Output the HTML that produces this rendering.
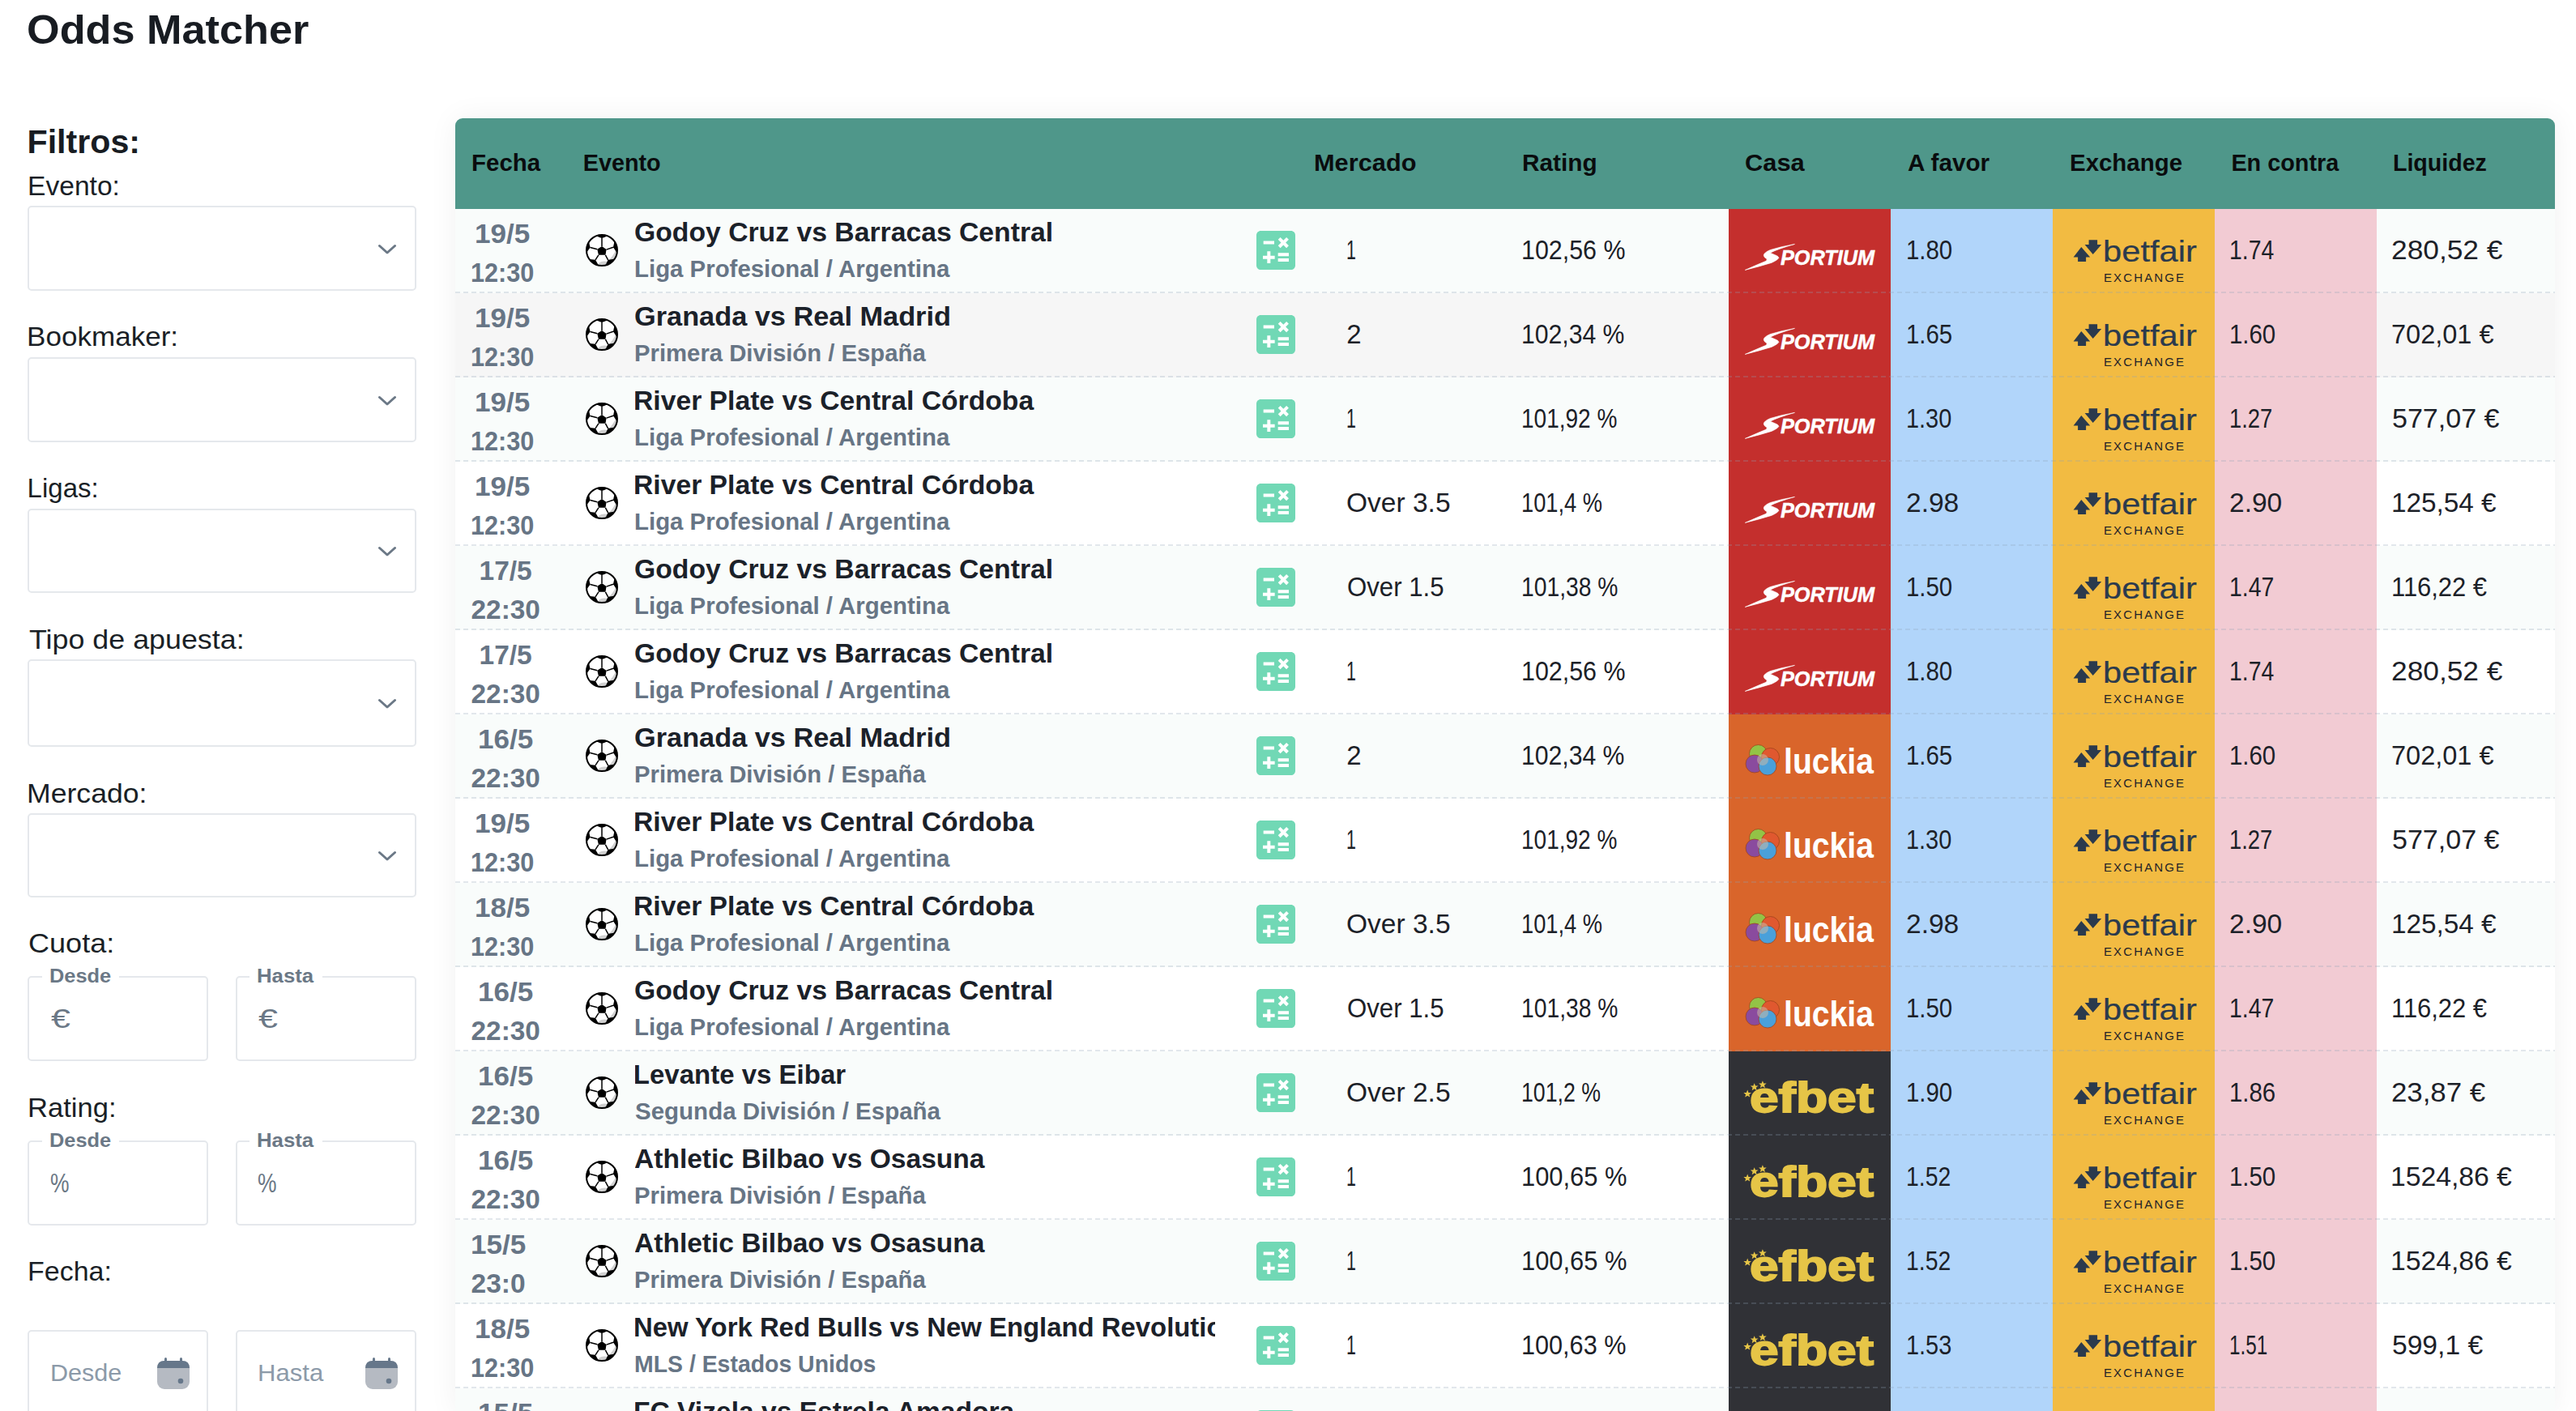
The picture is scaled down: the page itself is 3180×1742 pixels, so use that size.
<!DOCTYPE html><html><head><meta charset="utf-8"><style>
html,body{margin:0;padding:0}
body{width:3180px;height:1742px;overflow:hidden;background:#fff;position:relative;font-family:"Liberation Sans",sans-serif}
.t{position:absolute;white-space:nowrap;line-height:1}
.box{position:absolute;box-sizing:border-box;border:2px solid #e5e8ec;border-radius:5px;background:#fff}
.chev{position:absolute;width:24px;height:14px}
.card{position:absolute;left:562px;top:146px;width:2592px;height:1600px;border-radius:9px 9px 0 0;box-shadow:0 0 36px rgba(20,30,40,0.06);overflow:hidden;background:#fff}
.hdr{position:absolute;left:0;top:0;width:2592px;height:112px;background:#4f978a}
.row{position:absolute;left:0;width:2592px;height:104px}
.cell{position:absolute;top:0;height:104px}
.dash{position:absolute;left:0;bottom:0;height:2px;width:100%;background:repeating-linear-gradient(90deg,rgba(140,160,180,0.25) 0 6px,transparent 6px 10px)}
</style></head><body>
<div class="t" style="left:32.9px;top:12.2px;font-size:49.4px;font-weight:bold;color:#181c22;transform:scaleX(1.0578);transform-origin:0 0;">Odds Matcher</div>
<div class="t" style="left:33.5px;top:155.3px;font-size:41.2px;font-weight:bold;color:#181c22;transform-origin:0 0;">Filtros:</div>
<div class="t" style="left:33.5px;top:213.1px;font-size:33.0px;font-weight:normal;color:#1a1f26;transform:scaleX(1.0179);transform-origin:0 0;">Evento:</div>
<div class="t" style="left:33.4px;top:399.1px;font-size:33.0px;font-weight:normal;color:#1a1f26;transform:scaleX(1.0625);transform-origin:0 0;">Bookmaker:</div>
<div class="t" style="left:33.6px;top:586.1px;font-size:33.0px;font-weight:normal;color:#1a1f26;transform-origin:0 0;">Ligas:</div>
<div class="t" style="left:35.5px;top:772.7px;font-size:33.0px;font-weight:normal;color:#1a1f26;transform:scaleX(1.0857);transform-origin:0 0;">Tipo de apuesta:</div>
<div class="t" style="left:33.4px;top:962.8px;font-size:33.0px;font-weight:normal;color:#1a1f26;transform:scaleX(1.0797);transform-origin:0 0;">Mercado:</div>
<div class="t" style="left:34.5px;top:1148.3px;font-size:33.0px;font-weight:normal;color:#1a1f26;transform:scaleX(1.0928);transform-origin:0 0;">Cuota:</div>
<div class="t" style="left:33.5px;top:1351.1px;font-size:33.0px;font-weight:normal;color:#1a1f26;transform:scaleX(1.0476);transform-origin:0 0;">Rating:</div>
<div class="t" style="left:33.5px;top:1553.1px;font-size:33.0px;font-weight:normal;color:#1a1f26;transform:scaleX(1.0297);transform-origin:0 0;">Fecha:</div>
<div class="box" style="left:34px;top:254px;width:480px;height:105px"></div>
<svg class="chev" style="left:466px;top:299.5px" viewBox="0 0 24 14"><path d="M2.5 3.5 L12 12 L21.5 3.5" fill="none" stroke="#6b7886" stroke-width="3" stroke-linecap="round" stroke-linejoin="round"/></svg>
<div class="box" style="left:34px;top:441px;width:480px;height:105px"></div>
<svg class="chev" style="left:466px;top:486.5px" viewBox="0 0 24 14"><path d="M2.5 3.5 L12 12 L21.5 3.5" fill="none" stroke="#6b7886" stroke-width="3" stroke-linecap="round" stroke-linejoin="round"/></svg>
<div class="box" style="left:34px;top:628px;width:480px;height:104px"></div>
<svg class="chev" style="left:466px;top:673.0px" viewBox="0 0 24 14"><path d="M2.5 3.5 L12 12 L21.5 3.5" fill="none" stroke="#6b7886" stroke-width="3" stroke-linecap="round" stroke-linejoin="round"/></svg>
<div class="box" style="left:34px;top:814px;width:480px;height:107.5px"></div>
<svg class="chev" style="left:466px;top:860.75px" viewBox="0 0 24 14"><path d="M2.5 3.5 L12 12 L21.5 3.5" fill="none" stroke="#6b7886" stroke-width="3" stroke-linecap="round" stroke-linejoin="round"/></svg>
<div class="box" style="left:34px;top:1004px;width:480px;height:103.5px"></div>
<svg class="chev" style="left:466px;top:1048.75px" viewBox="0 0 24 14"><path d="M2.5 3.5 L12 12 L21.5 3.5" fill="none" stroke="#6b7886" stroke-width="3" stroke-linecap="round" stroke-linejoin="round"/></svg>
<div class="box" style="left:34px;top:1205px;width:223px;height:105px"></div>
<div style="position:absolute;left:52px;top:1203px;width:95px;height:6px;background:#fff"></div>
<div class="t" style="left:61.3px;top:1193.1px;font-size:24.7px;font-weight:bold;color:#6b7886;transform:scaleX(1.0270);transform-origin:0 0;">Desde</div>
<div class="t" style="left:62.7px;top:1241.1px;font-size:33.0px;font-weight:normal;color:#6b7886;transform:scaleX(1.3000);transform-origin:0 0;">€</div>
<div class="box" style="left:291px;top:1205px;width:223px;height:105px"></div>
<div style="position:absolute;left:308px;top:1203px;width:90px;height:6px;background:#fff"></div>
<div class="t" style="left:317.3px;top:1193.1px;font-size:24.7px;font-weight:bold;color:#6b7886;transform:scaleX(1.0435);transform-origin:0 0;">Hasta</div>
<div class="t" style="left:318.7px;top:1241.1px;font-size:33.0px;font-weight:normal;color:#6b7886;transform:scaleX(1.3000);transform-origin:0 0;">€</div>
<div class="box" style="left:34px;top:1408px;width:223px;height:105px"></div>
<div style="position:absolute;left:52px;top:1406px;width:95px;height:6px;background:#fff"></div>
<div class="t" style="left:61.3px;top:1396.1px;font-size:24.7px;font-weight:bold;color:#6b7886;transform:scaleX(1.0270);transform-origin:0 0;">Desde</div>
<div class="t" style="left:62.1px;top:1444.1px;font-size:33.0px;font-weight:normal;color:#6b7886;transform:scaleX(0.8000);transform-origin:0 0;">%</div>
<div class="box" style="left:291px;top:1408px;width:223px;height:105px"></div>
<div style="position:absolute;left:308px;top:1406px;width:90px;height:6px;background:#fff"></div>
<div class="t" style="left:317.3px;top:1396.1px;font-size:24.7px;font-weight:bold;color:#6b7886;transform:scaleX(1.0435);transform-origin:0 0;">Hasta</div>
<div class="t" style="left:318.1px;top:1444.1px;font-size:33.0px;font-weight:normal;color:#6b7886;transform:scaleX(0.8000);transform-origin:0 0;">%</div>
<div class="box" style="left:34px;top:1642px;width:223px;height:140px"></div>
<div class="t" style="left:61.5px;top:1680.6px;font-size:28.8px;font-weight:normal;color:#8c9aa9;transform:scaleX(1.0602);transform-origin:0 0;">Desde</div>
<svg style="position:absolute;left:194px;top:1675px;width:42px;height:42px" viewBox="0 0 42 42"><rect x="0" y="5" width="40" height="35" rx="9" fill="#b5bac2"/><path d="M0 14 V14 Q0 5 9 5 H31 Q40 5 40 14 V14 Z" fill="#66778a"/><rect x="9" y="1" width="3" height="7" rx="1.5" fill="#66778a"/><rect x="28" y="1" width="3" height="7" rx="1.5" fill="#66778a"/><circle cx="29" cy="30" r="3.3" fill="#66778a"/></svg>
<div class="box" style="left:291px;top:1642px;width:223px;height:140px"></div>
<div class="t" style="left:318.0px;top:1680.6px;font-size:28.8px;font-weight:normal;color:#8c9aa9;transform:scaleX(1.0789);transform-origin:0 0;">Hasta</div>
<svg style="position:absolute;left:451px;top:1675px;width:42px;height:42px" viewBox="0 0 42 42"><rect x="0" y="5" width="40" height="35" rx="9" fill="#b5bac2"/><path d="M0 14 V14 Q0 5 9 5 H31 Q40 5 40 14 V14 Z" fill="#66778a"/><rect x="9" y="1" width="3" height="7" rx="1.5" fill="#66778a"/><rect x="28" y="1" width="3" height="7" rx="1.5" fill="#66778a"/><circle cx="29" cy="30" r="3.3" fill="#66778a"/></svg>
<div class="card">
<div class="hdr"></div>
<div class="t" style="left:20.3px;top:41.1px;font-size:28.8px;font-weight:bold;color:#0a0c0e;transform:scaleX(1.0238);transform-origin:0 0;">Fecha</div>
<div class="t" style="left:157.7px;top:41.1px;font-size:28.8px;font-weight:bold;color:#0a0c0e;transform-origin:0 0;">Evento</div>
<div class="t" style="left:1060.1px;top:41.1px;font-size:28.8px;font-weight:bold;color:#0a0c0e;transform:scaleX(1.0678);transform-origin:0 0;">Mercado</div>
<div class="t" style="left:1317.2px;top:41.1px;font-size:28.8px;font-weight:bold;color:#0a0c0e;transform:scaleX(1.0333);transform-origin:0 0;">Rating</div>
<div class="t" style="left:1592.2px;top:41.1px;font-size:28.8px;font-weight:bold;color:#0a0c0e;transform:scaleX(1.0714);transform-origin:0 0;">Casa</div>
<div class="t" style="left:1792.8px;top:41.1px;font-size:28.8px;font-weight:bold;color:#0a0c0e;transform:scaleX(1.0306);transform-origin:0 0;">A favor</div>
<div class="t" style="left:1992.9px;top:41.1px;font-size:28.8px;font-weight:bold;color:#0a0c0e;transform:scaleX(1.0221);transform-origin:0 0;">Exchange</div>
<div class="t" style="left:2192.4px;top:41.1px;font-size:28.8px;font-weight:bold;color:#0a0c0e;transform-origin:0 0;">En contra</div>
<div class="t" style="left:2392.1px;top:41.1px;font-size:28.8px;font-weight:bold;color:#0a0c0e;transform:scaleX(0.9915);transform-origin:0 0;">Liquidez</div>
<svg width="0" height="0" style="position:absolute"><defs>
<clipPath id="bc"><circle cx="20" cy="20" r="19"/></clipPath>
<symbol id="ball" viewBox="0 0 40 40">
<circle cx="20" cy="20" r="19" fill="#fff"/>
<g clip-path="url(#bc)">
<path d="M38.5 20 L37.5 30.5 L29.5 31.6 Q33.5 27 37.5 20Z M16 35.8 Q21 32.2 27 34 L25 39 L16 39Z" fill="#d0d0d0"/>
<g fill="#000">
<path d="M10 -2 L13.8 2.6 Q17 4.6 20 4.9 Q23 4.6 26.2 2.6 L30 -2Z"/>
<path d="M3.9 9.2 L5.6 16.6 L1.2 22.8 L-3 22.8 L-3 9.2Z"/>
<path d="M35.4 9.6 L34 16.3 L38.6 23.3 L43 23.3 L43 9.6Z"/>
<path d="M4.9 31.1 L12 31.85 L15.9 38.6 L14 43 L0 35Z"/>
<path d="M27.6 31.85 L36.8 30.4 L40 35 L26 43 L24.4 38.6Z"/>
<polygon points="20,15 25.65,19.1 24.4,25.8 15.9,25.8 14.3,18.7"/>
</g>
<path d="M20 15 V4.5 M25.65 19.1 L34 16.3 M24.4 25.8 L27.6 31.85 M15.9 25.8 L12 31.85 M14.3 18.7 L5.6 16.6" stroke="#000" stroke-width="1.5" fill="none"/>
</g>
<circle cx="20" cy="20" r="19" fill="none" stroke="#000" stroke-width="2"/>
</symbol>
<symbol id="calc" viewBox="3 3 18 18"><path fill="#71d8b5" d="M19 3H5c-1.1 0-2 .9-2 2v14c0 1.1.9 2 2 2h14c1.1 0 2-.9 2-2V5c0-1.1-.9-2-2-2z"/><path fill="#fff" d="M13.03 7.06L14.09 6l1.41 1.41L16.91 6l1.06 1.06-1.41 1.41 1.41 1.41-1.06 1.06-1.41-1.4-1.41 1.41-1.06-1.06 1.41-1.41-1.41-1.42zm-6.78.66h5v1.5h-5v-1.5zM11.5 16h-2v2H8v-2H6v-1.5h2v-2h1.5v2h2V16zm6.5 1.25h-5v-1.5h5v1.5zm0-2.5h-5v-1.5h5v1.5z"/></symbol>
<symbol id="sportium" viewBox="0 0 200 104">
<path d="M81.5 43.4 Q66 46 51.4 50.5 Q44 53.5 43.2 57 Q43.5 60 47.2 61.8 L46.6 64.1 Q38 67.5 20.3 75.4 Q38 71 52.9 66.4 Q60.5 63 61.9 60.4 Q61.5 58.5 59 57.5 L51.4 54.2 Q60 49.5 81.5 43.4 Z" fill="#fff" stroke="#fff" stroke-width="0.6" stroke-linejoin="round"/>
<text x="64" y="69" font-family="Liberation Sans" font-weight="bold" font-style="italic" font-size="25" fill="#fff" textLength="116" lengthAdjust="spacingAndGlyphs" stroke="#fff" stroke-width="0.5">PORTIUM</text>
</symbol>
<symbol id="luckia" viewBox="0 0 200 104">
<g transform="translate(42 57)" stroke="#a0441c" stroke-width="0.8"><circle cx="-5.5" cy="-8.5" r="11" fill="#93c346"/><circle cx="9.5" cy="-4.5" r="11" fill="#e0582f"/><circle cx="-10" cy="4" r="11" fill="#8a4b9e"/><circle cx="6" cy="7" r="11" fill="#4aa0da"/><circle cx="0" cy="-1" r="7" fill="#c8b9a8" opacity="0.55" stroke="none"/></g>
<text x="68" y="72.5" font-family="Liberation Sans" font-weight="bold" font-size="45" fill="#fff" textLength="111" lengthAdjust="spacingAndGlyphs">luckia</text>
</symbol>
<symbol id="efbet" viewBox="0 0 200 104">
<text x="26" y="75" font-family="Liberation Sans" font-weight="bold" font-size="51" fill="#e6c547" stroke="#e6c547" stroke-width="1.8" textLength="153" lengthAdjust="spacingAndGlyphs">efbet</text>
<g fill="#e6c547"><polygon points="23.2,47.6 24.5,50.9 28,51 25.3,53.2 26.2,56.6 23.2,54.7 20.2,56.6 21.1,53.2 18.4,51 21.9,50.9"/><polygon points="31.7,39.2 33,42.5 36.5,42.6 33.8,44.8 34.7,48.2 31.7,46.3 28.7,48.2 29.6,44.8 26.9,42.6 30.4,42.5"/><polygon points="41.9,36.2 43.2,39.5 46.7,39.6 44,41.8 44.9,45.2 41.9,43.3 38.9,45.2 39.8,41.8 37.1,39.6 40.6,39.5"/></g>
</symbol>
<symbol id="betfair" viewBox="0 0 200 104">
<g fill="#2b3a4d"><polygon points="25.6,59.5 35.3,47.1 46.2,59.5 41.1,59.5 41.1,64.9 31.1,64.9 31.1,59.5"/><polygon points="44.6,38.2 55.1,38.2 55.1,44 60.2,44 49.7,56 39.6,44 44.6,44"/></g>
<text x="62" y="64.6" font-family="Liberation Sans" font-size="36" fill="#2b3a4d" stroke="#2b3a4d" stroke-width="0.2" textLength="116" lengthAdjust="spacingAndGlyphs">betfair</text>
<text x="63" y="89.8" font-family="Liberation Sans" font-size="15" fill="#1f2328" textLength="99" lengthAdjust="spacing">EXCHANGE</text>
</symbol>
</defs></svg>
<div class="row" style="top:112px;background:#f9fcfb">
<div class="cell" style="left:1572px;width:200px;background:#c42f2d"></div>
<div class="cell" style="left:1772px;width:200px;background:#b1d5fa"></div>
<div class="cell" style="left:1972px;width:200px;background:#f2bb42"></div>
<div class="cell" style="left:2172px;width:200px;background:#f2cbd3"></div>
<svg style="position:absolute;left:1572px;top:0px;width:200px;height:104px"><use href="#sportium"/></svg>
<svg style="position:absolute;left:1972px;top:0px;width:200px;height:104px"><use href="#betfair"/></svg>
<div class="dash"></div>
<div class="t" style="left:-341.5px;width:800px;text-align:center;top:14.1px;font-size:33.0px;font-weight:bold;color:#677585;"><span style="display:inline-block;transform:scaleX(1.0625);transform-origin:50% 0">19/5</span></div>
<div class="t" style="left:-341.5px;width:800px;text-align:center;top:62.1px;font-size:33.0px;font-weight:bold;color:#677585;"><span style="display:inline-block;transform:scaleX(0.9286);transform-origin:50% 0">12:30</span></div>
<svg style="position:absolute;left:161px;top:31px;width:40px;height:40px"><use href="#ball"/></svg>
<div style="position:absolute;left:222px;top:0;width:716px;height:104px;overflow:hidden">
<div class="t" style="left:-1.4px;top:12.1px;font-size:33.0px;font-weight:bold;color:#1b2129;transform:scaleX(1.0217);transform-origin:0 0;">Godoy Cruz vs Barracas Central</div>
<div class="t" style="left:-1.2px;top:59.6px;font-size:28.8px;font-weight:bold;color:#677585;transform:scaleX(1.0209);transform-origin:0 0;">Liga Profesional / Argentina</div>
</div>
<svg style="position:absolute;left:989px;top:27px;width:48px;height:48px"><use href="#calc"/></svg>
<div class="t" style="left:1100.4px;top:33.9px;font-size:33.0px;font-weight:normal;color:#1c2128;transform:scaleX(0.6500);transform-origin:0 0;">1</div>
<div class="t" style="left:1315.7px;top:33.9px;font-size:33.0px;font-weight:normal;color:#1c2128;transform:scaleX(0.9209);transform-origin:0 0;">102,56 %</div>
<div class="t" style="left:1790.8px;top:33.9px;font-size:33.0px;font-weight:normal;color:#1c2128;transform:scaleX(0.8906);transform-origin:0 0;">1.80</div>
<div class="t" style="left:2189.8px;top:33.9px;font-size:33.0px;font-weight:normal;color:#1c2128;transform:scaleX(0.8594);transform-origin:0 0;">1.74</div>
<div class="t" style="left:2390.2px;top:33.9px;font-size:33.0px;font-weight:normal;color:#1c2128;transform:scaleX(1.0698);transform-origin:0 0;">280,52 €</div>
</div>
<div class="row" style="top:216px;background:#f6f6f6">
<div class="cell" style="left:1572px;width:200px;background:#c42f2d"></div>
<div class="cell" style="left:1772px;width:200px;background:#b1d5fa"></div>
<div class="cell" style="left:1972px;width:200px;background:#f2bb42"></div>
<div class="cell" style="left:2172px;width:200px;background:#f2cbd3"></div>
<svg style="position:absolute;left:1572px;top:0px;width:200px;height:104px"><use href="#sportium"/></svg>
<svg style="position:absolute;left:1972px;top:0px;width:200px;height:104px"><use href="#betfair"/></svg>
<div class="dash"></div>
<div class="t" style="left:-341.5px;width:800px;text-align:center;top:14.1px;font-size:33.0px;font-weight:bold;color:#677585;"><span style="display:inline-block;transform:scaleX(1.0625);transform-origin:50% 0">19/5</span></div>
<div class="t" style="left:-341.5px;width:800px;text-align:center;top:62.1px;font-size:33.0px;font-weight:bold;color:#677585;"><span style="display:inline-block;transform:scaleX(0.9286);transform-origin:50% 0">12:30</span></div>
<svg style="position:absolute;left:161px;top:31px;width:40px;height:40px"><use href="#ball"/></svg>
<div style="position:absolute;left:222px;top:0;width:716px;height:104px;overflow:hidden">
<div class="t" style="left:-1.4px;top:12.1px;font-size:33.0px;font-weight:bold;color:#1b2129;transform:scaleX(1.0399);transform-origin:0 0;">Granada vs Real Madrid</div>
<div class="t" style="left:-1.2px;top:59.6px;font-size:28.8px;font-weight:bold;color:#677585;transform:scaleX(1.0169);transform-origin:0 0;">Primera División / España</div>
</div>
<svg style="position:absolute;left:989px;top:27px;width:48px;height:48px"><use href="#calc"/></svg>
<div class="t" style="left:1100.3px;top:33.9px;font-size:33.0px;font-weight:normal;color:#1c2128;transform-origin:0 0;">2</div>
<div class="t" style="left:1315.7px;top:33.9px;font-size:33.0px;font-weight:normal;color:#1c2128;transform:scaleX(0.9137);transform-origin:0 0;">102,34 %</div>
<div class="t" style="left:1790.8px;top:33.9px;font-size:33.0px;font-weight:normal;color:#1c2128;transform:scaleX(0.8906);transform-origin:0 0;">1.65</div>
<div class="t" style="left:2189.8px;top:33.9px;font-size:33.0px;font-weight:normal;color:#1c2128;transform:scaleX(0.8906);transform-origin:0 0;">1.60</div>
<div class="t" style="left:2390.3px;top:33.9px;font-size:33.0px;font-weight:normal;color:#1c2128;transform:scaleX(0.9845);transform-origin:0 0;">702,01 €</div>
</div>
<div class="row" style="top:320px;background:#f9fcfb">
<div class="cell" style="left:1572px;width:200px;background:#c42f2d"></div>
<div class="cell" style="left:1772px;width:200px;background:#b1d5fa"></div>
<div class="cell" style="left:1972px;width:200px;background:#f2bb42"></div>
<div class="cell" style="left:2172px;width:200px;background:#f2cbd3"></div>
<svg style="position:absolute;left:1572px;top:0px;width:200px;height:104px"><use href="#sportium"/></svg>
<svg style="position:absolute;left:1972px;top:0px;width:200px;height:104px"><use href="#betfair"/></svg>
<div class="dash"></div>
<div class="t" style="left:-341.5px;width:800px;text-align:center;top:14.1px;font-size:33.0px;font-weight:bold;color:#677585;"><span style="display:inline-block;transform:scaleX(1.0625);transform-origin:50% 0">19/5</span></div>
<div class="t" style="left:-341.5px;width:800px;text-align:center;top:62.1px;font-size:33.0px;font-weight:bold;color:#677585;"><span style="display:inline-block;transform:scaleX(0.9286);transform-origin:50% 0">12:30</span></div>
<svg style="position:absolute;left:161px;top:31px;width:40px;height:40px"><use href="#ball"/></svg>
<div style="position:absolute;left:222px;top:0;width:716px;height:104px;overflow:hidden">
<div class="t" style="left:-2.3px;top:12.1px;font-size:33.0px;font-weight:bold;color:#1b2129;transform:scaleX(1.0206);transform-origin:0 0;">River Plate vs Central Córdoba</div>
<div class="t" style="left:-1.2px;top:59.6px;font-size:28.8px;font-weight:bold;color:#677585;transform:scaleX(1.0209);transform-origin:0 0;">Liga Profesional / Argentina</div>
</div>
<svg style="position:absolute;left:989px;top:27px;width:48px;height:48px"><use href="#calc"/></svg>
<div class="t" style="left:1100.4px;top:33.9px;font-size:33.0px;font-weight:normal;color:#1c2128;transform:scaleX(0.6500);transform-origin:0 0;">1</div>
<div class="t" style="left:1315.9px;top:33.9px;font-size:33.0px;font-weight:normal;color:#1c2128;transform:scaleX(0.8489);transform-origin:0 0;">101,92 %</div>
<div class="t" style="left:1790.8px;top:33.9px;font-size:33.0px;font-weight:normal;color:#1c2128;transform:scaleX(0.8750);transform-origin:0 0;">1.30</div>
<div class="t" style="left:2189.9px;top:33.9px;font-size:33.0px;font-weight:normal;color:#1c2128;transform:scaleX(0.8281);transform-origin:0 0;">1.27</div>
<div class="t" style="left:2390.6px;top:33.9px;font-size:33.0px;font-weight:normal;color:#1c2128;transform:scaleX(1.0310);transform-origin:0 0;">577,07 €</div>
</div>
<div class="row" style="top:424px;background:#ffffff">
<div class="cell" style="left:1572px;width:200px;background:#c42f2d"></div>
<div class="cell" style="left:1772px;width:200px;background:#b1d5fa"></div>
<div class="cell" style="left:1972px;width:200px;background:#f2bb42"></div>
<div class="cell" style="left:2172px;width:200px;background:#f2cbd3"></div>
<svg style="position:absolute;left:1572px;top:0px;width:200px;height:104px"><use href="#sportium"/></svg>
<svg style="position:absolute;left:1972px;top:0px;width:200px;height:104px"><use href="#betfair"/></svg>
<div class="dash"></div>
<div class="t" style="left:-341.5px;width:800px;text-align:center;top:14.1px;font-size:33.0px;font-weight:bold;color:#677585;"><span style="display:inline-block;transform:scaleX(1.0625);transform-origin:50% 0">19/5</span></div>
<div class="t" style="left:-341.5px;width:800px;text-align:center;top:62.1px;font-size:33.0px;font-weight:bold;color:#677585;"><span style="display:inline-block;transform:scaleX(0.9286);transform-origin:50% 0">12:30</span></div>
<svg style="position:absolute;left:161px;top:31px;width:40px;height:40px"><use href="#ball"/></svg>
<div style="position:absolute;left:222px;top:0;width:716px;height:104px;overflow:hidden">
<div class="t" style="left:-2.3px;top:12.1px;font-size:33.0px;font-weight:bold;color:#1b2129;transform:scaleX(1.0206);transform-origin:0 0;">River Plate vs Central Córdoba</div>
<div class="t" style="left:-1.2px;top:59.6px;font-size:28.8px;font-weight:bold;color:#677585;transform:scaleX(1.0209);transform-origin:0 0;">Liga Profesional / Argentina</div>
</div>
<svg style="position:absolute;left:989px;top:27px;width:48px;height:48px"><use href="#calc"/></svg>
<div class="t" style="left:1100.4px;top:33.9px;font-size:33.0px;font-weight:normal;color:#1c2128;transform:scaleX(1.0157);transform-origin:0 0;">Over 3.5</div>
<div class="t" style="left:1315.9px;top:33.9px;font-size:33.0px;font-weight:normal;color:#1c2128;transform:scaleX(0.8264);transform-origin:0 0;">101,4 %</div>
<div class="t" style="left:1791.3px;top:33.9px;font-size:33.0px;font-weight:normal;color:#1c2128;transform:scaleX(1.0156);transform-origin:0 0;">2.98</div>
<div class="t" style="left:2190.3px;top:33.9px;font-size:33.0px;font-weight:normal;color:#1c2128;transform:scaleX(1.0156);transform-origin:0 0;">2.90</div>
<div class="t" style="left:2389.5px;top:33.9px;font-size:33.0px;font-weight:normal;color:#1c2128;transform:scaleX(1.0078);transform-origin:0 0;">125,54 €</div>
</div>
<div class="row" style="top:528px;background:#f9fcfb">
<div class="cell" style="left:1572px;width:200px;background:#c42f2d"></div>
<div class="cell" style="left:1772px;width:200px;background:#b1d5fa"></div>
<div class="cell" style="left:1972px;width:200px;background:#f2bb42"></div>
<div class="cell" style="left:2172px;width:200px;background:#f2cbd3"></div>
<svg style="position:absolute;left:1572px;top:0px;width:200px;height:104px"><use href="#sportium"/></svg>
<svg style="position:absolute;left:1972px;top:0px;width:200px;height:104px"><use href="#betfair"/></svg>
<div class="dash"></div>
<div class="t" style="left:-338.0px;width:800px;text-align:center;top:14.1px;font-size:33.0px;font-weight:bold;color:#677585;"><span style="display:inline-block;transform:scaleX(1.0156);transform-origin:50% 0">17/5</span></div>
<div class="t" style="left:-338.0px;width:800px;text-align:center;top:62.1px;font-size:33.0px;font-weight:bold;color:#677585;"><span style="display:inline-block;transform:scaleX(1.0119);transform-origin:50% 0">22:30</span></div>
<svg style="position:absolute;left:161px;top:31px;width:40px;height:40px"><use href="#ball"/></svg>
<div style="position:absolute;left:222px;top:0;width:716px;height:104px;overflow:hidden">
<div class="t" style="left:-1.4px;top:12.1px;font-size:33.0px;font-weight:bold;color:#1b2129;transform:scaleX(1.0217);transform-origin:0 0;">Godoy Cruz vs Barracas Central</div>
<div class="t" style="left:-1.2px;top:59.6px;font-size:28.8px;font-weight:bold;color:#677585;transform:scaleX(1.0209);transform-origin:0 0;">Liga Profesional / Argentina</div>
</div>
<svg style="position:absolute;left:989px;top:27px;width:48px;height:48px"><use href="#calc"/></svg>
<div class="t" style="left:1100.5px;top:33.9px;font-size:33.0px;font-weight:normal;color:#1c2128;transform:scaleX(0.9449);transform-origin:0 0;">Over 1.5</div>
<div class="t" style="left:1315.8px;top:33.9px;font-size:33.0px;font-weight:normal;color:#1c2128;transform:scaleX(0.8561);transform-origin:0 0;">101,38 %</div>
<div class="t" style="left:1790.8px;top:33.9px;font-size:33.0px;font-weight:normal;color:#1c2128;transform:scaleX(0.8906);transform-origin:0 0;">1.50</div>
<div class="t" style="left:2189.8px;top:33.9px;font-size:33.0px;font-weight:normal;color:#1c2128;transform:scaleX(0.8594);transform-origin:0 0;">1.47</div>
<div class="t" style="left:2389.6px;top:33.9px;font-size:33.0px;font-weight:normal;color:#1c2128;transform:scaleX(0.9365);transform-origin:0 0;">116,22 €</div>
</div>
<div class="row" style="top:632px;background:#ffffff">
<div class="cell" style="left:1572px;width:200px;background:#c42f2d"></div>
<div class="cell" style="left:1772px;width:200px;background:#b1d5fa"></div>
<div class="cell" style="left:1972px;width:200px;background:#f2bb42"></div>
<div class="cell" style="left:2172px;width:200px;background:#f2cbd3"></div>
<svg style="position:absolute;left:1572px;top:0px;width:200px;height:104px"><use href="#sportium"/></svg>
<svg style="position:absolute;left:1972px;top:0px;width:200px;height:104px"><use href="#betfair"/></svg>
<div class="dash"></div>
<div class="t" style="left:-338.0px;width:800px;text-align:center;top:14.1px;font-size:33.0px;font-weight:bold;color:#677585;"><span style="display:inline-block;transform:scaleX(1.0156);transform-origin:50% 0">17/5</span></div>
<div class="t" style="left:-338.0px;width:800px;text-align:center;top:62.1px;font-size:33.0px;font-weight:bold;color:#677585;"><span style="display:inline-block;transform:scaleX(1.0119);transform-origin:50% 0">22:30</span></div>
<svg style="position:absolute;left:161px;top:31px;width:40px;height:40px"><use href="#ball"/></svg>
<div style="position:absolute;left:222px;top:0;width:716px;height:104px;overflow:hidden">
<div class="t" style="left:-1.4px;top:12.1px;font-size:33.0px;font-weight:bold;color:#1b2129;transform:scaleX(1.0217);transform-origin:0 0;">Godoy Cruz vs Barracas Central</div>
<div class="t" style="left:-1.2px;top:59.6px;font-size:28.8px;font-weight:bold;color:#677585;transform:scaleX(1.0209);transform-origin:0 0;">Liga Profesional / Argentina</div>
</div>
<svg style="position:absolute;left:989px;top:27px;width:48px;height:48px"><use href="#calc"/></svg>
<div class="t" style="left:1100.4px;top:33.9px;font-size:33.0px;font-weight:normal;color:#1c2128;transform:scaleX(0.6500);transform-origin:0 0;">1</div>
<div class="t" style="left:1315.7px;top:33.9px;font-size:33.0px;font-weight:normal;color:#1c2128;transform:scaleX(0.9209);transform-origin:0 0;">102,56 %</div>
<div class="t" style="left:1790.8px;top:33.9px;font-size:33.0px;font-weight:normal;color:#1c2128;transform:scaleX(0.8906);transform-origin:0 0;">1.80</div>
<div class="t" style="left:2189.8px;top:33.9px;font-size:33.0px;font-weight:normal;color:#1c2128;transform:scaleX(0.8594);transform-origin:0 0;">1.74</div>
<div class="t" style="left:2390.2px;top:33.9px;font-size:33.0px;font-weight:normal;color:#1c2128;transform:scaleX(1.0698);transform-origin:0 0;">280,52 €</div>
</div>
<div class="row" style="top:736px;background:#f9fcfb">
<div class="cell" style="left:1572px;width:200px;background:#d9652b"></div>
<div class="cell" style="left:1772px;width:200px;background:#b1d5fa"></div>
<div class="cell" style="left:1972px;width:200px;background:#f2bb42"></div>
<div class="cell" style="left:2172px;width:200px;background:#f2cbd3"></div>
<svg style="position:absolute;left:1572px;top:0px;width:200px;height:104px"><use href="#luckia"/></svg>
<svg style="position:absolute;left:1972px;top:0px;width:200px;height:104px"><use href="#betfair"/></svg>
<div class="dash"></div>
<div class="t" style="left:-338.0px;width:800px;text-align:center;top:14.1px;font-size:33.0px;font-weight:bold;color:#677585;"><span style="display:inline-block;transform:scaleX(1.0625);transform-origin:50% 0">16/5</span></div>
<div class="t" style="left:-338.0px;width:800px;text-align:center;top:62.1px;font-size:33.0px;font-weight:bold;color:#677585;"><span style="display:inline-block;transform:scaleX(1.0119);transform-origin:50% 0">22:30</span></div>
<svg style="position:absolute;left:161px;top:31px;width:40px;height:40px"><use href="#ball"/></svg>
<div style="position:absolute;left:222px;top:0;width:716px;height:104px;overflow:hidden">
<div class="t" style="left:-1.4px;top:12.1px;font-size:33.0px;font-weight:bold;color:#1b2129;transform:scaleX(1.0399);transform-origin:0 0;">Granada vs Real Madrid</div>
<div class="t" style="left:-1.2px;top:59.6px;font-size:28.8px;font-weight:bold;color:#677585;transform:scaleX(1.0169);transform-origin:0 0;">Primera División / España</div>
</div>
<svg style="position:absolute;left:989px;top:27px;width:48px;height:48px"><use href="#calc"/></svg>
<div class="t" style="left:1100.3px;top:33.9px;font-size:33.0px;font-weight:normal;color:#1c2128;transform-origin:0 0;">2</div>
<div class="t" style="left:1315.7px;top:33.9px;font-size:33.0px;font-weight:normal;color:#1c2128;transform:scaleX(0.9137);transform-origin:0 0;">102,34 %</div>
<div class="t" style="left:1790.8px;top:33.9px;font-size:33.0px;font-weight:normal;color:#1c2128;transform:scaleX(0.8906);transform-origin:0 0;">1.65</div>
<div class="t" style="left:2189.8px;top:33.9px;font-size:33.0px;font-weight:normal;color:#1c2128;transform:scaleX(0.8906);transform-origin:0 0;">1.60</div>
<div class="t" style="left:2390.3px;top:33.9px;font-size:33.0px;font-weight:normal;color:#1c2128;transform:scaleX(0.9845);transform-origin:0 0;">702,01 €</div>
</div>
<div class="row" style="top:840px;background:#ffffff">
<div class="cell" style="left:1572px;width:200px;background:#d9652b"></div>
<div class="cell" style="left:1772px;width:200px;background:#b1d5fa"></div>
<div class="cell" style="left:1972px;width:200px;background:#f2bb42"></div>
<div class="cell" style="left:2172px;width:200px;background:#f2cbd3"></div>
<svg style="position:absolute;left:1572px;top:0px;width:200px;height:104px"><use href="#luckia"/></svg>
<svg style="position:absolute;left:1972px;top:0px;width:200px;height:104px"><use href="#betfair"/></svg>
<div class="dash"></div>
<div class="t" style="left:-341.5px;width:800px;text-align:center;top:14.1px;font-size:33.0px;font-weight:bold;color:#677585;"><span style="display:inline-block;transform:scaleX(1.0625);transform-origin:50% 0">19/5</span></div>
<div class="t" style="left:-341.5px;width:800px;text-align:center;top:62.1px;font-size:33.0px;font-weight:bold;color:#677585;"><span style="display:inline-block;transform:scaleX(0.9286);transform-origin:50% 0">12:30</span></div>
<svg style="position:absolute;left:161px;top:31px;width:40px;height:40px"><use href="#ball"/></svg>
<div style="position:absolute;left:222px;top:0;width:716px;height:104px;overflow:hidden">
<div class="t" style="left:-2.3px;top:12.1px;font-size:33.0px;font-weight:bold;color:#1b2129;transform:scaleX(1.0206);transform-origin:0 0;">River Plate vs Central Córdoba</div>
<div class="t" style="left:-1.2px;top:59.6px;font-size:28.8px;font-weight:bold;color:#677585;transform:scaleX(1.0209);transform-origin:0 0;">Liga Profesional / Argentina</div>
</div>
<svg style="position:absolute;left:989px;top:27px;width:48px;height:48px"><use href="#calc"/></svg>
<div class="t" style="left:1100.4px;top:33.9px;font-size:33.0px;font-weight:normal;color:#1c2128;transform:scaleX(0.6500);transform-origin:0 0;">1</div>
<div class="t" style="left:1315.9px;top:33.9px;font-size:33.0px;font-weight:normal;color:#1c2128;transform:scaleX(0.8489);transform-origin:0 0;">101,92 %</div>
<div class="t" style="left:1790.8px;top:33.9px;font-size:33.0px;font-weight:normal;color:#1c2128;transform:scaleX(0.8750);transform-origin:0 0;">1.30</div>
<div class="t" style="left:2189.9px;top:33.9px;font-size:33.0px;font-weight:normal;color:#1c2128;transform:scaleX(0.8281);transform-origin:0 0;">1.27</div>
<div class="t" style="left:2390.6px;top:33.9px;font-size:33.0px;font-weight:normal;color:#1c2128;transform:scaleX(1.0310);transform-origin:0 0;">577,07 €</div>
</div>
<div class="row" style="top:944px;background:#f9fcfb">
<div class="cell" style="left:1572px;width:200px;background:#d9652b"></div>
<div class="cell" style="left:1772px;width:200px;background:#b1d5fa"></div>
<div class="cell" style="left:1972px;width:200px;background:#f2bb42"></div>
<div class="cell" style="left:2172px;width:200px;background:#f2cbd3"></div>
<svg style="position:absolute;left:1572px;top:0px;width:200px;height:104px"><use href="#luckia"/></svg>
<svg style="position:absolute;left:1972px;top:0px;width:200px;height:104px"><use href="#betfair"/></svg>
<div class="dash"></div>
<div class="t" style="left:-341.5px;width:800px;text-align:center;top:14.1px;font-size:33.0px;font-weight:bold;color:#677585;"><span style="display:inline-block;transform:scaleX(1.0625);transform-origin:50% 0">18/5</span></div>
<div class="t" style="left:-341.5px;width:800px;text-align:center;top:62.1px;font-size:33.0px;font-weight:bold;color:#677585;"><span style="display:inline-block;transform:scaleX(0.9286);transform-origin:50% 0">12:30</span></div>
<svg style="position:absolute;left:161px;top:31px;width:40px;height:40px"><use href="#ball"/></svg>
<div style="position:absolute;left:222px;top:0;width:716px;height:104px;overflow:hidden">
<div class="t" style="left:-2.3px;top:12.1px;font-size:33.0px;font-weight:bold;color:#1b2129;transform:scaleX(1.0206);transform-origin:0 0;">River Plate vs Central Córdoba</div>
<div class="t" style="left:-1.2px;top:59.6px;font-size:28.8px;font-weight:bold;color:#677585;transform:scaleX(1.0209);transform-origin:0 0;">Liga Profesional / Argentina</div>
</div>
<svg style="position:absolute;left:989px;top:27px;width:48px;height:48px"><use href="#calc"/></svg>
<div class="t" style="left:1100.4px;top:33.9px;font-size:33.0px;font-weight:normal;color:#1c2128;transform:scaleX(1.0157);transform-origin:0 0;">Over 3.5</div>
<div class="t" style="left:1315.9px;top:33.9px;font-size:33.0px;font-weight:normal;color:#1c2128;transform:scaleX(0.8264);transform-origin:0 0;">101,4 %</div>
<div class="t" style="left:1791.3px;top:33.9px;font-size:33.0px;font-weight:normal;color:#1c2128;transform:scaleX(1.0156);transform-origin:0 0;">2.98</div>
<div class="t" style="left:2190.3px;top:33.9px;font-size:33.0px;font-weight:normal;color:#1c2128;transform:scaleX(1.0156);transform-origin:0 0;">2.90</div>
<div class="t" style="left:2389.5px;top:33.9px;font-size:33.0px;font-weight:normal;color:#1c2128;transform:scaleX(1.0078);transform-origin:0 0;">125,54 €</div>
</div>
<div class="row" style="top:1048px;background:#ffffff">
<div class="cell" style="left:1572px;width:200px;background:#d9652b"></div>
<div class="cell" style="left:1772px;width:200px;background:#b1d5fa"></div>
<div class="cell" style="left:1972px;width:200px;background:#f2bb42"></div>
<div class="cell" style="left:2172px;width:200px;background:#f2cbd3"></div>
<svg style="position:absolute;left:1572px;top:0px;width:200px;height:104px"><use href="#luckia"/></svg>
<svg style="position:absolute;left:1972px;top:0px;width:200px;height:104px"><use href="#betfair"/></svg>
<div class="dash"></div>
<div class="t" style="left:-338.0px;width:800px;text-align:center;top:14.1px;font-size:33.0px;font-weight:bold;color:#677585;"><span style="display:inline-block;transform:scaleX(1.0625);transform-origin:50% 0">16/5</span></div>
<div class="t" style="left:-338.0px;width:800px;text-align:center;top:62.1px;font-size:33.0px;font-weight:bold;color:#677585;"><span style="display:inline-block;transform:scaleX(1.0119);transform-origin:50% 0">22:30</span></div>
<svg style="position:absolute;left:161px;top:31px;width:40px;height:40px"><use href="#ball"/></svg>
<div style="position:absolute;left:222px;top:0;width:716px;height:104px;overflow:hidden">
<div class="t" style="left:-1.4px;top:12.1px;font-size:33.0px;font-weight:bold;color:#1b2129;transform:scaleX(1.0217);transform-origin:0 0;">Godoy Cruz vs Barracas Central</div>
<div class="t" style="left:-1.2px;top:59.6px;font-size:28.8px;font-weight:bold;color:#677585;transform:scaleX(1.0209);transform-origin:0 0;">Liga Profesional / Argentina</div>
</div>
<svg style="position:absolute;left:989px;top:27px;width:48px;height:48px"><use href="#calc"/></svg>
<div class="t" style="left:1100.5px;top:33.9px;font-size:33.0px;font-weight:normal;color:#1c2128;transform:scaleX(0.9449);transform-origin:0 0;">Over 1.5</div>
<div class="t" style="left:1315.8px;top:33.9px;font-size:33.0px;font-weight:normal;color:#1c2128;transform:scaleX(0.8561);transform-origin:0 0;">101,38 %</div>
<div class="t" style="left:1790.8px;top:33.9px;font-size:33.0px;font-weight:normal;color:#1c2128;transform:scaleX(0.8906);transform-origin:0 0;">1.50</div>
<div class="t" style="left:2189.8px;top:33.9px;font-size:33.0px;font-weight:normal;color:#1c2128;transform:scaleX(0.8594);transform-origin:0 0;">1.47</div>
<div class="t" style="left:2389.6px;top:33.9px;font-size:33.0px;font-weight:normal;color:#1c2128;transform:scaleX(0.9365);transform-origin:0 0;">116,22 €</div>
</div>
<div class="row" style="top:1152px;background:#f9fcfb">
<div class="cell" style="left:1572px;width:200px;background:#303136"></div>
<div class="cell" style="left:1772px;width:200px;background:#b1d5fa"></div>
<div class="cell" style="left:1972px;width:200px;background:#f2bb42"></div>
<div class="cell" style="left:2172px;width:200px;background:#f2cbd3"></div>
<svg style="position:absolute;left:1572px;top:0px;width:200px;height:104px"><use href="#efbet"/></svg>
<svg style="position:absolute;left:1972px;top:0px;width:200px;height:104px"><use href="#betfair"/></svg>
<div class="dash"></div>
<div class="t" style="left:-338.0px;width:800px;text-align:center;top:14.1px;font-size:33.0px;font-weight:bold;color:#677585;"><span style="display:inline-block;transform:scaleX(1.0625);transform-origin:50% 0">16/5</span></div>
<div class="t" style="left:-338.0px;width:800px;text-align:center;top:62.1px;font-size:33.0px;font-weight:bold;color:#677585;"><span style="display:inline-block;transform:scaleX(1.0119);transform-origin:50% 0">22:30</span></div>
<svg style="position:absolute;left:161px;top:31px;width:40px;height:40px"><use href="#ball"/></svg>
<div style="position:absolute;left:222px;top:0;width:716px;height:104px;overflow:hidden">
<div class="t" style="left:-2.2px;top:12.1px;font-size:33.0px;font-weight:bold;color:#1b2129;transform-origin:0 0;">Levante vs Eibar</div>
<div class="t" style="left:-0.0px;top:59.6px;font-size:28.8px;font-weight:bold;color:#677585;transform:scaleX(1.0244);transform-origin:0 0;">Segunda División / España</div>
</div>
<svg style="position:absolute;left:989px;top:27px;width:48px;height:48px"><use href="#calc"/></svg>
<div class="t" style="left:1100.4px;top:33.9px;font-size:33.0px;font-weight:normal;color:#1c2128;transform:scaleX(1.0157);transform-origin:0 0;">Over 2.5</div>
<div class="t" style="left:1316.0px;top:33.9px;font-size:33.0px;font-weight:normal;color:#1c2128;transform:scaleX(0.8099);transform-origin:0 0;">101,2 %</div>
<div class="t" style="left:1790.8px;top:33.9px;font-size:33.0px;font-weight:normal;color:#1c2128;transform:scaleX(0.8906);transform-origin:0 0;">1.90</div>
<div class="t" style="left:2189.8px;top:33.9px;font-size:33.0px;font-weight:normal;color:#1c2128;transform:scaleX(0.8906);transform-origin:0 0;">1.86</div>
<div class="t" style="left:2390.2px;top:33.9px;font-size:33.0px;font-weight:normal;color:#1c2128;transform:scaleX(1.0545);transform-origin:0 0;">23,87 €</div>
</div>
<div class="row" style="top:1256px;background:#ffffff">
<div class="cell" style="left:1572px;width:200px;background:#303136"></div>
<div class="cell" style="left:1772px;width:200px;background:#b1d5fa"></div>
<div class="cell" style="left:1972px;width:200px;background:#f2bb42"></div>
<div class="cell" style="left:2172px;width:200px;background:#f2cbd3"></div>
<svg style="position:absolute;left:1572px;top:0px;width:200px;height:104px"><use href="#efbet"/></svg>
<svg style="position:absolute;left:1972px;top:0px;width:200px;height:104px"><use href="#betfair"/></svg>
<div class="dash"></div>
<div class="t" style="left:-338.0px;width:800px;text-align:center;top:14.1px;font-size:33.0px;font-weight:bold;color:#677585;"><span style="display:inline-block;transform:scaleX(1.0625);transform-origin:50% 0">16/5</span></div>
<div class="t" style="left:-338.0px;width:800px;text-align:center;top:62.1px;font-size:33.0px;font-weight:bold;color:#677585;"><span style="display:inline-block;transform:scaleX(1.0119);transform-origin:50% 0">22:30</span></div>
<svg style="position:absolute;left:161px;top:31px;width:40px;height:40px"><use href="#ball"/></svg>
<div style="position:absolute;left:222px;top:0;width:716px;height:104px;overflow:hidden">
<div class="t" style="left:-0.8px;top:12.1px;font-size:33.0px;font-weight:bold;color:#1b2129;transform:scaleX(1.0164);transform-origin:0 0;">Athletic Bilbao vs Osasuna</div>
<div class="t" style="left:-1.2px;top:59.6px;font-size:28.8px;font-weight:bold;color:#677585;transform:scaleX(1.0169);transform-origin:0 0;">Primera División / España</div>
</div>
<svg style="position:absolute;left:989px;top:27px;width:48px;height:48px"><use href="#calc"/></svg>
<div class="t" style="left:1100.4px;top:33.9px;font-size:33.0px;font-weight:normal;color:#1c2128;transform:scaleX(0.6500);transform-origin:0 0;">1</div>
<div class="t" style="left:1315.6px;top:33.9px;font-size:33.0px;font-weight:normal;color:#1c2128;transform:scaleX(0.9353);transform-origin:0 0;">100,65 %</div>
<div class="t" style="left:1790.8px;top:33.9px;font-size:33.0px;font-weight:normal;color:#1c2128;transform:scaleX(0.8594);transform-origin:0 0;">1.52</div>
<div class="t" style="left:2189.8px;top:33.9px;font-size:33.0px;font-weight:normal;color:#1c2128;transform:scaleX(0.8906);transform-origin:0 0;">1.50</div>
<div class="t" style="left:2389.4px;top:33.9px;font-size:33.0px;font-weight:normal;color:#1c2128;transform:scaleX(1.0204);transform-origin:0 0;">1524,86 €</div>
</div>
<div class="row" style="top:1360px;background:#f9fcfb">
<div class="cell" style="left:1572px;width:200px;background:#303136"></div>
<div class="cell" style="left:1772px;width:200px;background:#b1d5fa"></div>
<div class="cell" style="left:1972px;width:200px;background:#f2bb42"></div>
<div class="cell" style="left:2172px;width:200px;background:#f2cbd3"></div>
<svg style="position:absolute;left:1572px;top:0px;width:200px;height:104px"><use href="#efbet"/></svg>
<svg style="position:absolute;left:1972px;top:0px;width:200px;height:104px"><use href="#betfair"/></svg>
<div class="dash"></div>
<div class="t" style="left:-346.5px;width:800px;text-align:center;top:14.1px;font-size:33.0px;font-weight:bold;color:#677585;"><span style="display:inline-block;transform:scaleX(1.0625);transform-origin:50% 0">15/5</span></div>
<div class="t" style="left:-346.5px;width:800px;text-align:center;top:62.1px;font-size:33.0px;font-weight:bold;color:#677585;"><span style="display:inline-block;transform:scaleX(1.0152);transform-origin:50% 0">23:0</span></div>
<svg style="position:absolute;left:161px;top:31px;width:40px;height:40px"><use href="#ball"/></svg>
<div style="position:absolute;left:222px;top:0;width:716px;height:104px;overflow:hidden">
<div class="t" style="left:-0.8px;top:12.1px;font-size:33.0px;font-weight:bold;color:#1b2129;transform:scaleX(1.0164);transform-origin:0 0;">Athletic Bilbao vs Osasuna</div>
<div class="t" style="left:-1.2px;top:59.6px;font-size:28.8px;font-weight:bold;color:#677585;transform:scaleX(1.0169);transform-origin:0 0;">Primera División / España</div>
</div>
<svg style="position:absolute;left:989px;top:27px;width:48px;height:48px"><use href="#calc"/></svg>
<div class="t" style="left:1100.4px;top:33.9px;font-size:33.0px;font-weight:normal;color:#1c2128;transform:scaleX(0.6500);transform-origin:0 0;">1</div>
<div class="t" style="left:1315.6px;top:33.9px;font-size:33.0px;font-weight:normal;color:#1c2128;transform:scaleX(0.9353);transform-origin:0 0;">100,65 %</div>
<div class="t" style="left:1790.8px;top:33.9px;font-size:33.0px;font-weight:normal;color:#1c2128;transform:scaleX(0.8594);transform-origin:0 0;">1.52</div>
<div class="t" style="left:2189.8px;top:33.9px;font-size:33.0px;font-weight:normal;color:#1c2128;transform:scaleX(0.8906);transform-origin:0 0;">1.50</div>
<div class="t" style="left:2389.4px;top:33.9px;font-size:33.0px;font-weight:normal;color:#1c2128;transform:scaleX(1.0204);transform-origin:0 0;">1524,86 €</div>
</div>
<div class="row" style="top:1464px;background:#ffffff">
<div class="cell" style="left:1572px;width:200px;background:#303136"></div>
<div class="cell" style="left:1772px;width:200px;background:#b1d5fa"></div>
<div class="cell" style="left:1972px;width:200px;background:#f2bb42"></div>
<div class="cell" style="left:2172px;width:200px;background:#f2cbd3"></div>
<svg style="position:absolute;left:1572px;top:0px;width:200px;height:104px"><use href="#efbet"/></svg>
<svg style="position:absolute;left:1972px;top:0px;width:200px;height:104px"><use href="#betfair"/></svg>
<div class="dash"></div>
<div class="t" style="left:-341.5px;width:800px;text-align:center;top:14.1px;font-size:33.0px;font-weight:bold;color:#677585;"><span style="display:inline-block;transform:scaleX(1.0625);transform-origin:50% 0">18/5</span></div>
<div class="t" style="left:-341.5px;width:800px;text-align:center;top:62.1px;font-size:33.0px;font-weight:bold;color:#677585;"><span style="display:inline-block;transform:scaleX(0.9286);transform-origin:50% 0">12:30</span></div>
<svg style="position:absolute;left:161px;top:31px;width:40px;height:40px"><use href="#ball"/></svg>
<div style="position:absolute;left:222px;top:0;width:716px;height:104px;overflow:hidden">
<div class="t" style="left:-2.2px;top:12.1px;font-size:33.0px;font-weight:bold;color:#1b2129;transform:scaleX(0.9960);transform-origin:0 0;">New York Red Bulls vs New England Revolution</div>
<div class="t" style="left:-1.1px;top:59.6px;font-size:28.8px;font-weight:bold;color:#677585;transform:scaleX(0.9868);transform-origin:0 0;">MLS / Estados Unidos</div>
</div>
<svg style="position:absolute;left:989px;top:27px;width:48px;height:48px"><use href="#calc"/></svg>
<div class="t" style="left:1100.4px;top:33.9px;font-size:33.0px;font-weight:normal;color:#1c2128;transform:scaleX(0.6500);transform-origin:0 0;">1</div>
<div class="t" style="left:1315.7px;top:33.9px;font-size:33.0px;font-weight:normal;color:#1c2128;transform:scaleX(0.9281);transform-origin:0 0;">100,63 %</div>
<div class="t" style="left:1790.8px;top:33.9px;font-size:33.0px;font-weight:normal;color:#1c2128;transform:scaleX(0.8750);transform-origin:0 0;">1.53</div>
<div class="t" style="left:2190.2px;top:33.9px;font-size:33.0px;font-weight:normal;color:#1c2128;transform:scaleX(0.7344);transform-origin:0 0;">1.51</div>
<div class="t" style="left:2390.7px;top:33.9px;font-size:33.0px;font-weight:normal;color:#1c2128;transform:scaleX(1.0182);transform-origin:0 0;">599,1 €</div>
</div>
<div class="row" style="top:1568px;background:#f9fcfb">
<div class="cell" style="left:1572px;width:200px;background:#303136"></div>
<div class="cell" style="left:1772px;width:200px;background:#b1d5fa"></div>
<div class="cell" style="left:1972px;width:200px;background:#f2bb42"></div>
<div class="cell" style="left:2172px;width:200px;background:#f2cbd3"></div>
<svg style="position:absolute;left:1572px;top:0px;width:200px;height:104px"><use href="#efbet"/></svg>
<svg style="position:absolute;left:1972px;top:0px;width:200px;height:104px"><use href="#betfair"/></svg>
<div class="dash"></div>
<div class="t" style="left:-338.0px;width:800px;text-align:center;top:14.1px;font-size:33.0px;font-weight:bold;color:#677585;"><span style="display:inline-block;transform:scaleX(1.0625);transform-origin:50% 0">15/5</span></div>
<div class="t" style="left:-338.0px;width:800px;text-align:center;top:62.1px;font-size:33.0px;font-weight:bold;color:#677585;"><span style="display:inline-block;transform:scaleX(1.0119);transform-origin:50% 0">22:30</span></div>
<svg style="position:absolute;left:161px;top:31px;width:40px;height:40px"><use href="#ball"/></svg>
<div style="position:absolute;left:222px;top:0;width:716px;height:104px;overflow:hidden">
<div class="t" style="left:-2.2px;top:12.1px;font-size:33.0px;font-weight:bold;color:#1b2129;transform:scaleX(1.0173);transform-origin:0 0;">FC Vizela vs Estrela Amadora</div>
<div class="t" style="left:-1.2px;top:59.6px;font-size:28.8px;font-weight:bold;color:#677585;transform:scaleX(1.0215);transform-origin:0 0;">Liga Portugal / Portugal</div>
</div>
<svg style="position:absolute;left:989px;top:27px;width:48px;height:48px"><use href="#calc"/></svg>
<div class="t" style="left:1100.4px;top:33.9px;font-size:33.0px;font-weight:normal;color:#1c2128;transform:scaleX(0.6500);transform-origin:0 0;">1</div>
<div class="t" style="left:1315.7px;top:33.9px;font-size:33.0px;font-weight:normal;color:#1c2128;transform:scaleX(0.9091);transform-origin:0 0;">100,5 %</div>
<div class="t" style="left:1790.8px;top:33.9px;font-size:33.0px;font-weight:normal;color:#1c2128;transform:scaleX(0.8906);transform-origin:0 0;">1.60</div>
<div class="t" style="left:2189.8px;top:33.9px;font-size:33.0px;font-weight:normal;color:#1c2128;transform:scaleX(0.8594);transform-origin:0 0;">1.57</div>
<div class="t" style="left:2390.6px;top:33.9px;font-size:33.0px;font-weight:normal;color:#1c2128;transform:scaleX(1.0909);transform-origin:0 0;">300,0 €</div>
</div>
</div>
</body></html>
